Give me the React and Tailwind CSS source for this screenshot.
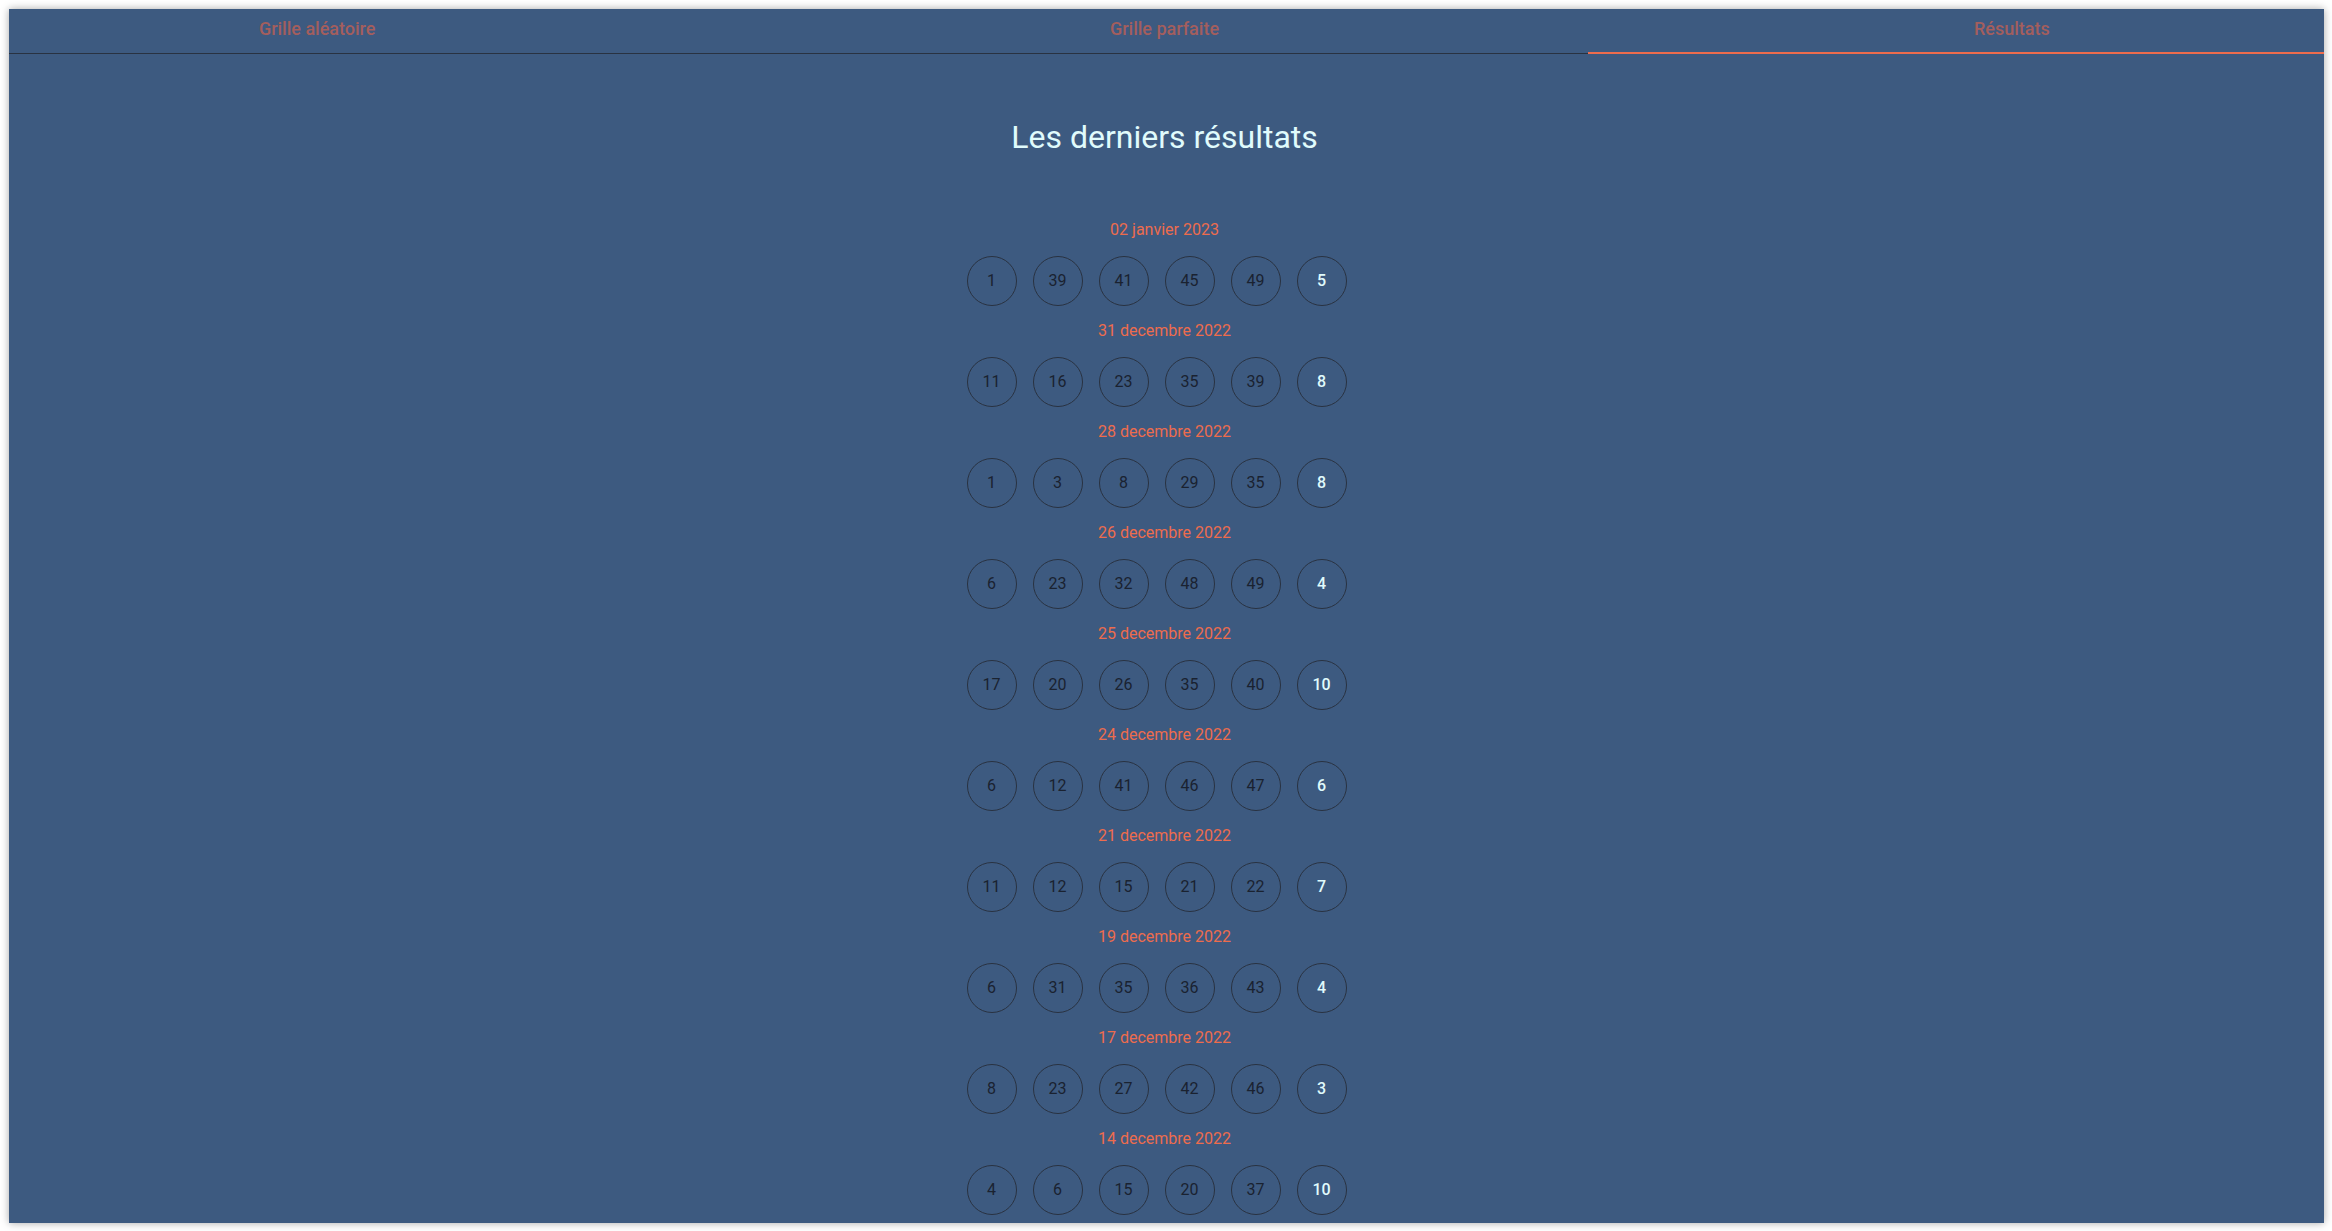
import React from 'react';

const tabs = ['Grille aléatoire', 'Grille parfaite', 'Résultats'];

const results = [
    { date: '02 janvier 2023', nums: [1, 39, 41, 45, 49], star: 5 },
    { date: '31 decembre 2022', nums: [11, 16, 23, 35, 39], star: 8 },
    { date: '28 decembre 2022', nums: [1, 3, 8, 29, 35], star: 8 },
    { date: '26 decembre 2022', nums: [6, 23, 32, 48, 49], star: 4 },
    { date: '25 decembre 2022', nums: [17, 20, 26, 35, 40], star: 10 },
    { date: '24 decembre 2022', nums: [6, 12, 41, 46, 47], star: 6 },
    { date: '21 decembre 2022', nums: [11, 12, 15, 21, 22], star: 7 },
    { date: '19 decembre 2022', nums: [6, 31, 35, 36, 43], star: 4 },
    { date: '17 decembre 2022', nums: [8, 23, 27, 42, 46], star: 3 },
    { date: '14 decembre 2022', nums: [4, 6, 15, 20, 37], star: 10 },
];

const Ball = ({ value, bonus }) => (
    <div
        className={`w-[50px] h-[50px] mr-4 rounded-full border border-[#293241] flex items-center justify-center text-base ${bonus ? 'text-[#e0fbfc] font-medium' : 'text-[#1a2230]'}`}
    >
        {value}
    </div>
);

const App = () => {
    const active = 2;

    return (
        <div className="w-screen h-[1231px] bg-white pt-[9px] pl-[9px] pr-2 pb-2 overflow-hidden" style={{ fontFamily: 'Roboto, "Noto Sans", sans-serif' }}>
            <div className="h-full bg-[#3d5a80] shadow-[0_0_8px_rgba(0,0,0,0.35)] overflow-hidden pr-[4px]">
                {/* tabs */}
                <div className="h-[45px] border-b border-[#293241] flex justify-center">
                    <div className="flex shrink-0 w-[2542px]">
                        {tabs.map((t, i) => (
                            <div key={t} className="relative w-1/3 h-[44px] pt-[8px] text-center text-[18px] leading-[23px] font-medium text-[#a45e5d]">
                                {t}
                                {i === active && (
                                    <div className="absolute z-10 left-0 right-0 bottom-[-1px] h-[2px] bg-[#ee6c4d]" />
                                )}
                            </div>
                        ))}
                    </div>
                </div>

                {/* content */}
                <div className="pt-[64px] flex flex-col items-center">
                    <h1 className="text-[32px] leading-[38px] text-[#e0fbfc]">Les derniers résultats</h1>

                    <div className="mt-[62px] flex flex-col items-center">
                        {results.map((r) => (
                            <div key={r.date} className="flex flex-col items-center">
                                <p className="text-base leading-6 text-[#ee6c4d]">{r.date}</p>
                                <div className="flex justify-center mt-[14px] mb-[13px]">
                                    {r.nums.map((n, i) => (
                                        <Ball key={i} value={n} />
                                    ))}
                                    <Ball value={r.star} bonus />
                                </div>
                            </div>
                        ))}
                    </div>
                </div>
            </div>
        </div>
    );
};

export default App;
